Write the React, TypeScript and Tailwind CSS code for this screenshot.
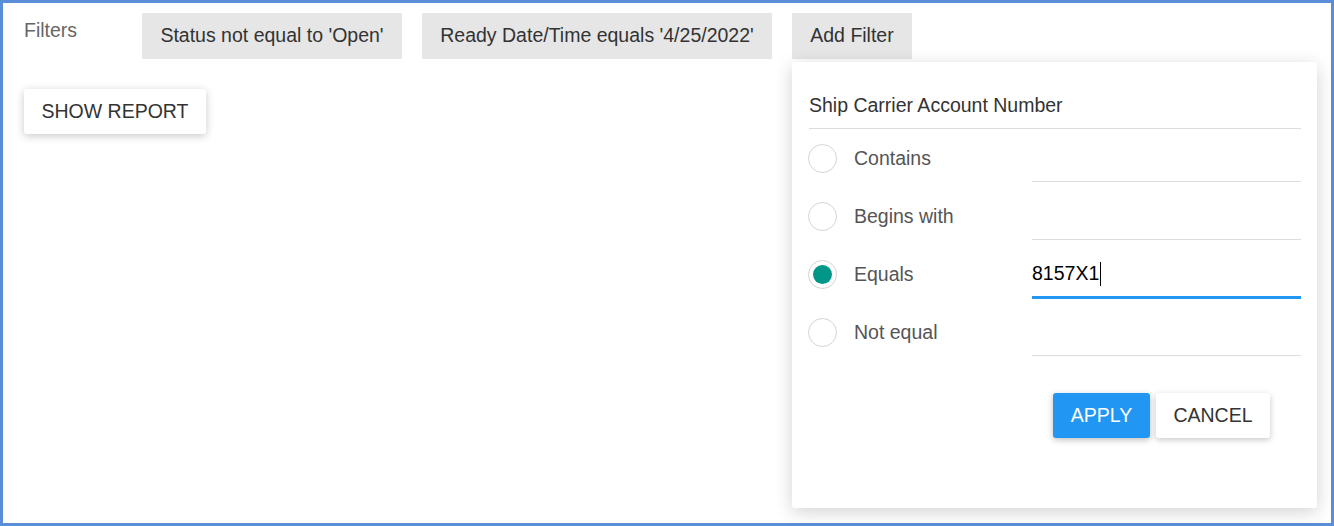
import { useState } from "react";

const ops = ["Contains", "Begins with", "Equals", "Not equal"];

export default function App() {
  const [selected, setSelected] = useState("Equals");
  const [value] = useState("8157X1");

  return (
    <div className="h-[526px] w-[1334px] border-[3px] border-[#5a8fd8] bg-white font-['Liberation_Sans',Arial,sans-serif] text-[19.5px] text-[#333] relative">
      <div className="flex items-start pl-[21px] pt-[10px]">
        <div className="w-[118px] mt-[4px] leading-[26px] text-[#666]">Filters</div>
        <div className="flex gap-[20px]">
          <div className="h-[46px] w-[260px] flex items-center justify-center bg-[#e6e6e6] whitespace-nowrap">Status not equal to 'Open'</div>
          <div className="h-[46px] w-[350px] flex items-center justify-center bg-[#e6e6e6] whitespace-nowrap">Ready Date/Time equals '4/25/2022'</div>
          <div className="relative">
            <div className="h-[46px] w-[120px] flex items-center justify-center bg-[#e6e6e6] whitespace-nowrap">Add Filter</div>

            {/* filter popup */}
            <div className="absolute left-0 top-[49px] w-[525px] h-[446px] bg-white rounded-[3px] shadow-[0_4px_18px_rgba(0,0,0,0.18)] pl-[17px] pr-[16px] z-10">
              <div className="pt-[30px] pb-[10px] leading-[26px] border-b border-[#dcdcdc]">Ship Carrier Account Number</div>
              {ops.map((op) => {
                const on = op === selected;
                return (
                  <div key={op} className="h-[58px] flex items-start">
                    <div className="flex items-center h-[58px] cursor-pointer" onClick={() => setSelected(op)}>
                      <div className="w-[29px] h-[29px] rounded-full border border-[#d4d4d4] flex items-center justify-center -ml-[1px]">
                        {on && <div className="w-[19px] h-[19px] rounded-full bg-[#009688]" />}
                      </div>
                      <span className="ml-[17px] mt-[1px] text-[#555]">{op}</span>
                    </div>
                    <div
                      className={
                        on
                          ? "ml-auto w-[269px] mt-[6px] h-[48px] border-b-[3px] border-[#2196f3] flex items-center text-black"
                          : "ml-auto w-[269px] mt-[6px] h-[47px] border-b border-[#dcdcdc]"
                      }
                    >
                      {on && (
                        <>
                          <span>{value}</span>
                          <span className="w-px h-[24px] bg-black ml-[1px]" />
                        </>
                      )}
                    </div>
                  </div>
                );
              })}
              <div className="flex gap-[6px] mt-[32px] ml-[244px]">
                <button className="h-[45px] w-[97px] rounded-[3px] bg-[#2196f3] text-white shadow-[0_2px_6px_rgba(0,0,0,0.25)]">APPLY</button>
                <button className="h-[45px] w-[114px] rounded-[3px] bg-white text-[#333] shadow-[0_2px_6px_rgba(0,0,0,0.22)]">CANCEL</button>
              </div>
            </div>
          </div>
        </div>
      </div>

      <div className="pl-[21px] mt-[30px]">
        <button className="h-[45px] w-[182px] bg-white rounded-[3px] shadow-[0_2px_8px_rgba(0,0,0,0.22)] text-[#333]">SHOW REPORT</button>
      </div>
    </div>
  );
}
